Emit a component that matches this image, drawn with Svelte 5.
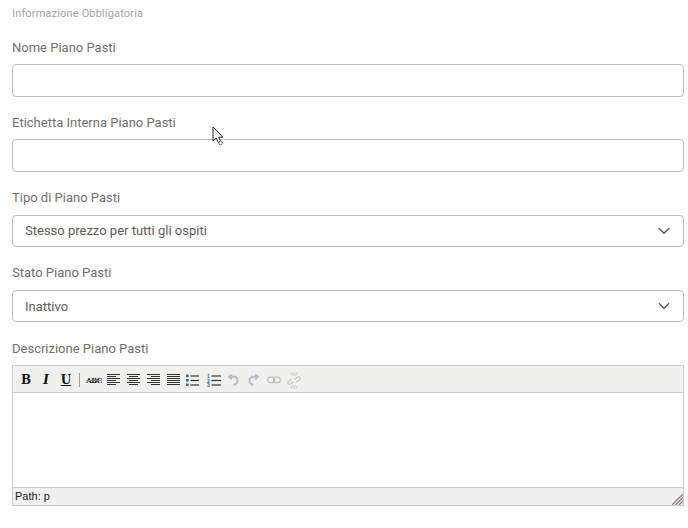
<script>
  const fields = [
    { label: 'Nome Piano Pasti', type: 'input' },
    { label: 'Etichetta Interna Piano Pasti', type: 'input' },
    { label: 'Tipo di Piano Pasti', type: 'select', value: 'Stesso prezzo per tutti gli ospiti' },
    { label: 'Stato Piano Pasti', type: 'select', value: 'Inattivo' }
  ];
</script>

<div class="form">
  <p class="hint">Informazione Obbligatoria</p>

  {#each fields as field}
    <div class="field">
      <span class="label">{field.label}</span>
      {#if field.type === 'input'}
        <input type="text" />
      {:else}
        <div class="select">
          <span>{field.value}</span>
          <svg width="12" height="8" viewBox="0 0 12 8" fill="none" stroke="#555" stroke-width="1.4">
            <path d="M1 1.2l5 5 5-5" />
          </svg>
        </div>
      {/if}
    </div>
  {/each}

  <span class="label">Descrizione Piano Pasti</span>
  <div class="editor">
    <div class="toolbar">
      <span class="btn bold">B</span>
      <span class="btn italic">I</span>
      <span class="btn under">U</span>
      <span class="sep"></span>
      <span class="btn abc">ABC</span>

      {#each ['left', 'center', 'right', 'full'] as align}
        <span class="btn">
          <svg width="14" height="12" viewBox="0 0 14 12" stroke="#333" stroke-width="1">
            {#each [0, 1, 2, 3, 4, 5] as i}
              {@const w = align === 'full' ? 13 : i % 2 ? 9 : 13}
              {@const x = align === 'center' ? (13 - w) / 2 : align === 'right' ? 13 - w : 0}
              <line x1={x} x2={x + w} y1={i * 2 + 0.5} y2={i * 2 + 0.5} />
            {/each}
          </svg>
        </span>
      {/each}

      <span class="btn list">
        <svg width="14" height="13" viewBox="0 0 14 13" stroke="#333" stroke-width="1.2">
          <rect x="0" y="0.5" width="2.6" height="2.6" fill="#2f6aa8" stroke="none" />
          <rect x="0" y="5" width="2.6" height="2.6" fill="#2f6aa8" stroke="none" />
          <rect x="0" y="9.5" width="2.6" height="2.6" fill="#2f6aa8" stroke="none" />
          <line x1="4.5" x2="13" y1="2" y2="2" />
          <line x1="4.5" x2="13" y1="6.5" y2="6.5" />
          <line x1="4.5" x2="13" y1="11" y2="11" />
        </svg>
      </span>
      <span class="btn">
        <svg width="14" height="13" viewBox="0 0 14 13" stroke="#333" stroke-width="1.2">
          <text class="num" x="0" y="4">1</text>
          <text class="num" x="0" y="8.5">2</text>
          <text class="num" x="0" y="13">3</text>
          <line x1="4.5" x2="14" y1="2" y2="2" />
          <line x1="4.5" x2="14" y1="6.5" y2="6.5" />
          <line x1="4.5" x2="14" y1="11" y2="11" />
        </svg>
      </span>

      <span class="btn off undo">
        <svg width="12" height="12" viewBox="0 0 12 12" fill="none" stroke="#8496a8" stroke-width="2">
          <path d="M6.5 11c2.500-.6 4-2.400 4-4.600C10.500 4.200 9 2.800 7 2.800H2.500M4.800.6L2.200 2.800l2.600 2.400" />
        </svg>
      </span>
      <span class="btn off">
        <svg width="12" height="12" viewBox="0 0 12 12" fill="none" stroke="#8496a8" stroke-width="2">
          <path d="M5.500 11C3 10.400 1.500 8.600 1.500 6.400 1.500 4.200 3 2.800 5 2.800h4.500M7.200.6l2.600 2.200-2.600 2.400" />
        </svg>
      </span>
      <span class="btn off">
        <svg width="14" height="8" viewBox="0 0 14 8" fill="none" stroke="#9a9a9a" stroke-width="1.3">
          <rect x="0.7" y="1.2" width="7" height="5.500" rx="2.700" />
          <rect x="6.300" y="1.200" width="7" height="5.500" rx="2.700" />
        </svg>
      </span>
      <span class="btn off">
        <svg width="14" height="17" viewBox="0 0 14 17" fill="none" stroke="#a8a8a8" stroke-width="1">
          <path d="M4 .5l1.500 3M10 .5L8.500 3.500M7 0v3.500M4 16.500l1.500-3M10 16.500l-1.500-3M7 17v-3.500" />
          <path d="M6.500 9.500L3.500 12c-2 1-3.500-1-2-2.500l3-2.500M7.500 7.500l3-2.500c2-1 3.500 1 2 2.500l-3 2.500" stroke-width="1.300" />
        </svg>
      </span>
    </div>

    <div class="area"></div>

    <div class="status">
      <span>Path: p</span>
      <svg class="grip" width="11" height="11" viewBox="0 0 11 11" stroke="#9c7a8a" stroke-width="1.300">
        <path d="M0 11L11 0M3.500 11L11 3.500M7 11l4-4" />
      </svg>
    </div>
  </div>

  <svg class="cursor" width="13" height="20" viewBox="0 0 13 20">
    <path d="M1 1v14l3.200-3 2.300 5 2.400-1-2.300-4.800H11z" fill="#fff" stroke="#222" stroke-width="1" />
    <circle cx="8.500" cy="17" r="1.800" fill="#fff" stroke="#5a6a80" stroke-width="1" />
  </svg>
</div>

<style>
  :global(body) {
    margin: 0;
    background: #fff;
  }

  .form {
    position: relative;
    display: flex;
    flex-direction: column;
    width: 672px;
    padding: 7px 4px 0 12px;
    font-family: Roboto, sans-serif;
    color: #666;
  }

  .hint {
    margin: 0 0 18.5px;
    font-size: 11px;
    letter-spacing: 0.16px;
    line-height: 14px;
    color: #a3a3a3;
  }

  .field {
    display: flex;
    flex-direction: column;
    margin-bottom: 18.33px;
  }

  .label {
    display: block;
    font-size: 13px;
    line-height: 16px;
    margin-bottom: 8.5px;
    color: #707070;
  }

  input,
  .select {
    box-sizing: border-box;
    width: 100%;
    height: 32.5px;
    border: 1px solid #bbb;
    border-radius: 4px;
    background: #fff;
    margin: 0;
  }

  .select {
    display: flex;
    align-items: center;
    justify-content: space-between;
    padding: 0 13px 0 12px;
    font-size: 13px;
    color: #5c5c5c;
  }

  .editor {
    display: flex;
    flex-direction: column;
    height: 141px;
    box-sizing: border-box;
    border: 1px solid #ccc;
    font-family: "Liberation Sans", Arial, sans-serif;
  }

  .toolbar {
    display: flex;
    align-items: center;
    box-sizing: border-box;
    height: 27px;
    padding: 2px 0 0 3px;
    background: #f0f0ee;
    border-bottom: 1px solid #ccc;
    color: #111;
  }

  .btn {
    display: flex;
    align-items: center;
    justify-content: center;
    flex: none;
    width: 20px;
    font-family: "DejaVu Serif", serif;
    font-size: 12px;
    font-weight: bold;
  }

  .italic {
    font-style: italic;
  }

  .under {
    text-decoration: underline;
  }

  .abc {
    font-size: 7px;
    letter-spacing: -0.5px;
    text-decoration: line-through;
    text-decoration-color: #888;
  }

  .num {
    font-family: "Liberation Sans", sans-serif;
    font-size: 5px;
    font-weight: bold;
    fill: #2f6aa8;
    stroke: none;
  }

  .sep {
    flex: none;
    width: 1px;
    height: 14px;
    margin: 0 4px 0 3px;
    background: #a99;
  }

  .off {
    opacity: 0.55;
  }

  .undo,
  .list {
    transform: translateX(-1px);
  }

  .area {
    flex: 1;
    background: #fff;
  }

  .status {
    position: relative;
    height: 17px;
    line-height: 17px;
    padding-left: 2px;
    font-size: 11px;
    color: #222;
    background: #f0f0ee;
    border-top: 1px solid #ccc;
  }

  .grip {
    position: absolute;
    right: 0;
    bottom: 0;
  }

  .cursor {
    position: absolute;
    left: 212px;
    top: 126px;
  }
</style>
